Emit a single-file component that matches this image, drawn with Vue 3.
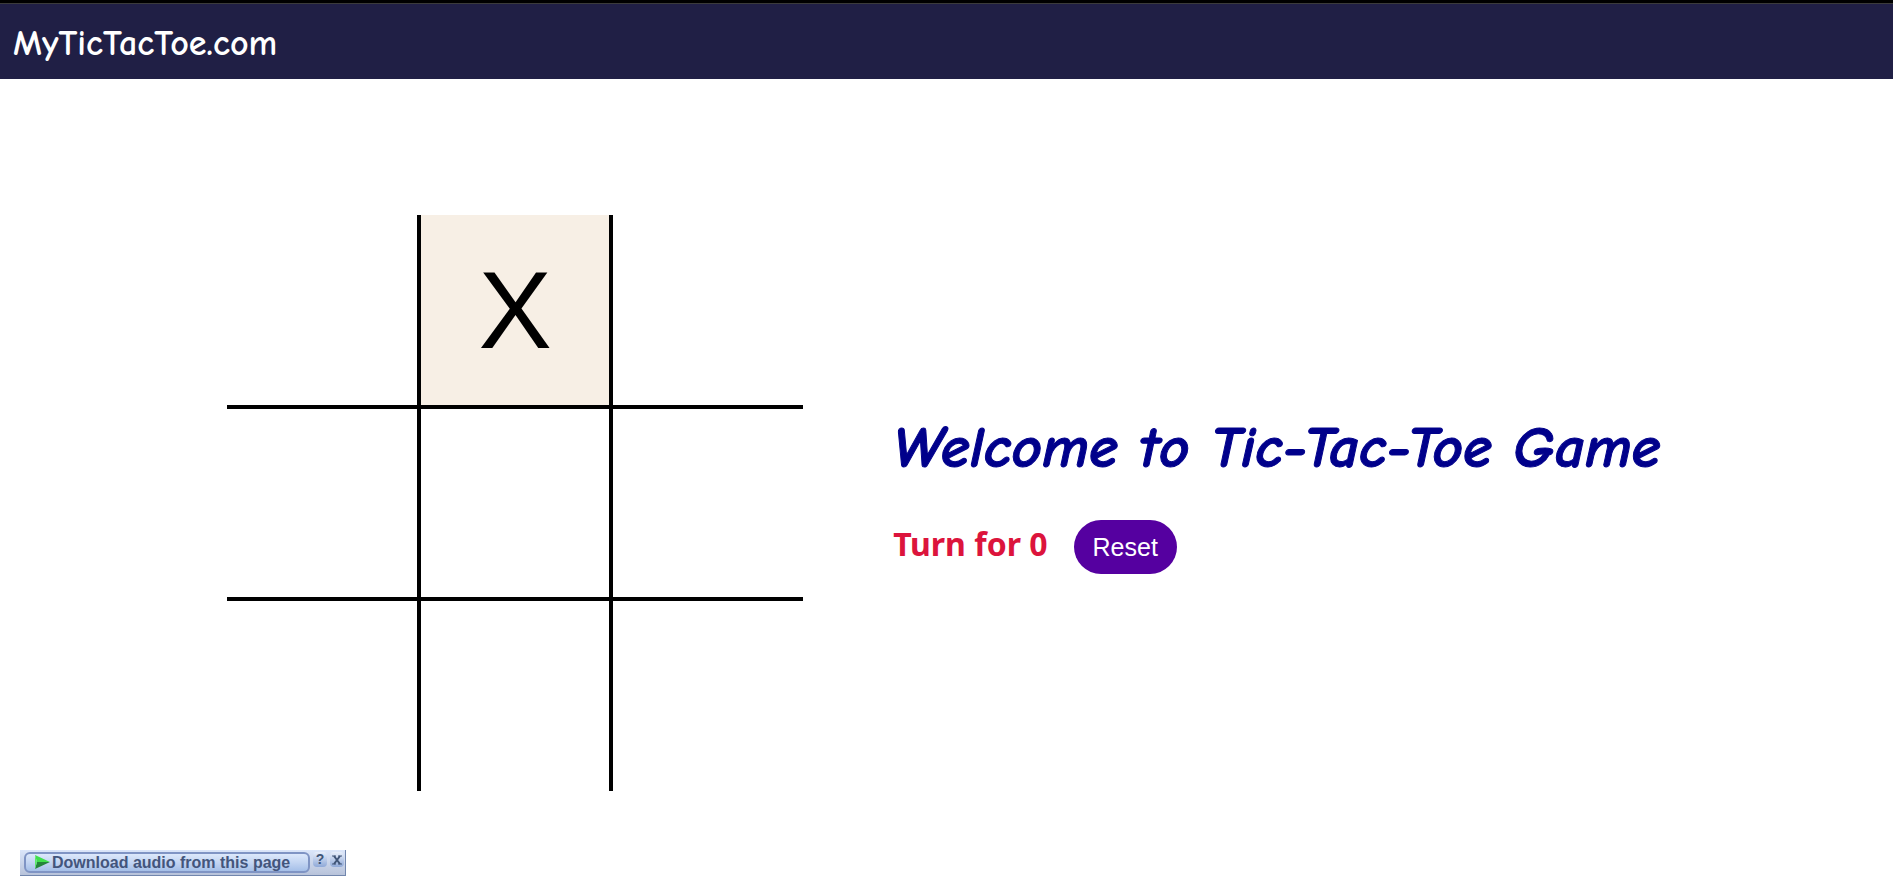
<script setup>
import { ref } from 'vue'

const cells = ref(['', 'X', '', '', '', '', '', '', ''])
const turn = ref('0')
const hovered = 1

function play(i) {
  if (cells.value[i]) return
  cells.value[i] = turn.value
  turn.value = turn.value === 'X' ? '0' : 'X'
}

function reset() {
  cells.value = Array(9).fill('')
  turn.value = 'X'
}
</script>

<template>
  <div class="page">
    <header class="navbar">
      <span class="brand">MyTicTacToe.com</span>
    </header>

    <main class="game">
      <div class="board">
        <button
          v-for="(mark, i) in cells"
          :key="i"
          type="button"
          class="cell"
          :class="{ active: i === hovered }"
          :aria-label="`Cell ${i + 1}`"
          @click="play(i)"
        >{{ mark }}</button>
      </div>

      <section class="info">
        <h1>Welcome to Tic-Tac-Toe Game</h1>
        <div class="status">
          <span class="turn">Turn for {{ turn }}</span>
          <button type="button" class="reset" @click="reset">Reset</button>
        </div>
      </section>
    </main>

    <aside class="audio-bar">
      <button type="button" class="download">
        <svg width="15" height="15" viewBox="0 0 15 15" aria-hidden="true">
          <path d="M0 0 L15 7 L2 7 Z" fill="#3fdf4b" />
          <path d="M2 7 L15 7 L0 14 Z" fill="#24843a" />
          <path d="M0 0 L2 7 L0 14 Z" fill="#5be86a" />
        </svg>
        <span>Download audio from this page</span>
      </button>
      <button type="button" class="mini" aria-label="Help">?</button>
      <button type="button" class="mini" aria-label="Close">
        <svg width="10" height="10" viewBox="0 0 10 10" aria-hidden="true">
          <path d="M0 1H4M6 1H10M0 9H4M6 9H10" stroke="#405577" stroke-width="1" />
          <path d="M2 1L8 9M8 1L2 9" stroke="#405577" stroke-width="2" />
        </svg>
      </button>
    </aside>
  </div>
</template>

<style>
body {
  margin: 0;
  background: #fff;
}
</style>

<style scoped>
.page {
  min-height: 100vh;
}

.navbar {
  box-sizing: border-box;
  height: 79px;
  padding: 6px 13px 0;
  display: flex;
  align-items: center;
  border-top: 3px solid #000;
  box-shadow: inset 0 1px #3b3b3b;
  background: #201f45;
  color: #fff;
}

.brand {
  font-family: "Comic Sans MS", "Comic Neue", "Open Sans", sans-serif;
  font-size: 36px;
  font-weight: 700;
  line-height: 40px;
}

.game {
  display: flex;
  align-items: center;
  gap: 90px;
  padding: 136px 0 0 12%;
}

.board {
  display: grid;
  flex: none;
  grid-template-columns: repeat(3, 192px);
  grid-auto-rows: 192px;
}

.cell {
  padding: 0;
  border: 2px solid #000;
  border-radius: 0;
  background: #fff;
  color: #000;
  font-family: "Liberation Sans", Arial, sans-serif;
  font-size: 110px;
  line-height: 120px;
  cursor: pointer;
}

.cell.active {
  background: #f7efe5;
}

.cell:nth-child(-n + 3) {
  border-top: 0;
}

.cell:nth-child(n + 7) {
  border-bottom: 0;
}

.cell:nth-child(3n + 1) {
  border-left: 0;
}

.cell:nth-child(3n) {
  border-right: 0;
}

.info {
  padding-bottom: 24px;
}

.info h1 {
  margin: 0;
  color: #00008b;
  font-family: "Comic Sans MS", "Comic Neue", "Open Sans", sans-serif;
  font-size: 59px;
  font-style: italic;
  font-weight: 700;
  line-height: 80px;
  white-space: nowrap;
  -webkit-text-stroke: 1px #00008b;
}

.status {
  display: flex;
  align-items: baseline;
  gap: 26px;
  margin-top: 32px;
}

.turn {
  color: #dc143c;
  font-family: "Noto Sans", "Open Sans", sans-serif;
  font-size: 32px;
  font-weight: 700;
  line-height: 40px;
}

.reset {
  padding: 12px 19px;
  border: 0;
  border-radius: 27px;
  background: #5500a0;
  color: #fff;
  font-family: "Liberation Sans", Arial, sans-serif;
  font-size: 25px;
  line-height: 30px;
  cursor: pointer;
}

.audio-bar {
  position: fixed;
  left: 20px;
  bottom: 14px;
  box-sizing: border-box;
  display: flex;
  align-items: flex-start;
  gap: 3px;
  padding: 2px 1px 2px 4px;
  border-right: 1px solid #7186ad;
  border-bottom: 1px solid #7186ad;
  background: linear-gradient(#dbe6fa, #b8c3da);
}

.download {
  box-sizing: border-box;
  display: flex;
  align-items: center;
  gap: 2px;
  width: 286px;
  height: 21px;
  padding: 0 9px;
  border: 2px solid #7f94c4;
  border-radius: 6px;
  background: linear-gradient(#dce8fb, #c3d5f2 50%, #a5bfe8);
  color: #43557c;
  font-family: "Liberation Sans", Arial, sans-serif;
  font-size: 16px;
  font-weight: 700;
  line-height: 18px;
  white-space: nowrap;
}

.download svg {
  flex: none;
}

.mini {
  display: flex;
  align-items: center;
  justify-content: center;
  width: 14px;
  height: 15px;
  padding: 0;
  border: 0;
  border-radius: 4px;
  background: linear-gradient(#e8effb, #8fa9d8);
  color: #405577;
  font-family: "Liberation Sans", Arial, sans-serif;
  font-size: 14px;
  font-weight: 700;
  line-height: 15px;
}
</style>
